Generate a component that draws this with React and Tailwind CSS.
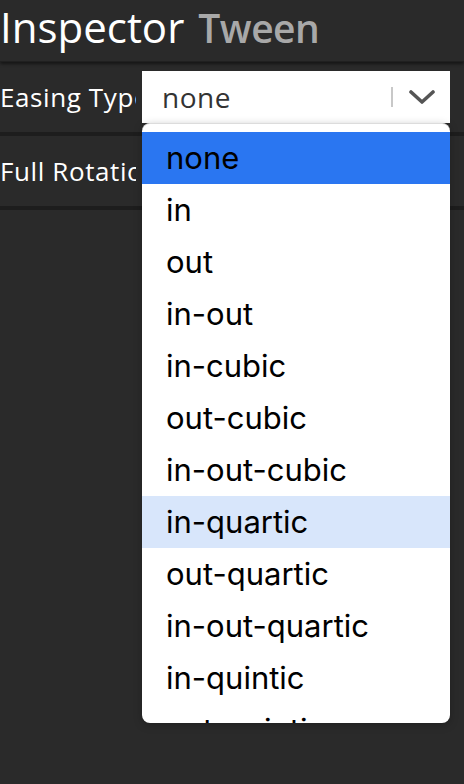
import React from "react";

const options = [
  "none",
  "in",
  "out",
  "in-out",
  "in-cubic",
  "out-cubic",
  "in-out-cubic",
  "in-quartic",
  "out-quartic",
  "in-out-quartic",
  "in-quintic",
  "out-quintic",
  "in-out-quintic",
];

function Chevron() {
  return (
    <svg width="26" height="16" viewBox="0 0 26 16" className="block">
      <path d="M2 3 L13 13 L24 3" fill="none" stroke="#555" strokeWidth="3.6" strokeLinecap="round" strokeLinejoin="round" />
    </svg>
  );
}

function Row({ label, children }) {
  return (
    <div className="flex items-center h-[74px] border-b-4 border-[#1d1d1d]">
      <div className="w-[136px] overflow-hidden whitespace-nowrap text-[26px] tracking-[0.6px] text-white">{label}</div>
      <div className="ml-[6px] flex-1 mr-[14px] relative">{children}</div>
    </div>
  );
}

export default function App() {
  return (
    <div className="w-[464px] h-[784px] overflow-hidden bg-[#2a2a2a] font-['Open_Sans','Lato',sans-serif]">
      <div className="h-[62px] flex items-baseline pt-[6px] leading-none shadow-[0_2px_3px_rgba(0,0,0,0.5)] relative z-10 border-b border-[#202020]">
        <span className="text-white text-[42px]">Inspector</span>
        <span className="ml-[14px] text-[#a8a8a8] text-[39px] font-semibold tracking-[-0.5px]">Tween</span>
      </div>
      <Row label="Easing Type">
        <div className="h-[52px] bg-white flex items-center pl-[20px] pr-[15px]">
          <span className="flex-1 text-[28px] tracking-[0.5px] text-[#333]">none</span>
          <span className="w-[2px] h-[20px] bg-[#c8c8c8] mr-[16px]" />
          <Chevron />
        </div>
        <div className="absolute left-0 right-0 top-[52px] z-20 h-[600px] bg-white rounded-[8px] border-t border-[#dcdcdc] overflow-hidden pt-[8px] shadow-[0_2px_8px_rgba(0,0,0,0.25)] font-['Inter','Liberation_Sans',sans-serif]">
          {options.map((o) => (
            <div
              key={o}
              className={`h-[52px] flex items-center pl-[24px] text-[31px] text-black ${
                o === "none" ? "bg-[#2a76f1]" : o === "in-quartic" ? "bg-[#d8e6fb]" : ""
              }`}
            >
              {o}
            </div>
          ))}
        </div>
      </Row>
      <Row label="Full Rotation">
        <div className="h-[52px]" />
      </Row>
    </div>
  );
}
